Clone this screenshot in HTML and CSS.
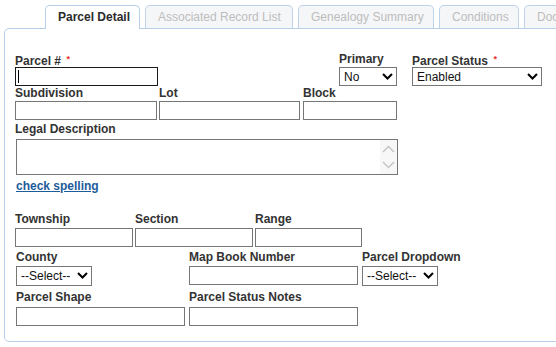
FILE: index.html
```html
<!DOCTYPE html>
<html lang="en">
<head>
    <meta charset="UTF-8">
    <meta name="viewport" content="width=device-width, initial-scale=1.0">
    <title>Parcel Detail</title>
    <link rel="stylesheet" href="styles.css">
</head>
<body>
    <div class="page">
        <div class="tabs">
            <div class="tab active tab-detail">Parcel Detail</div>
            <div class="tab tab-records">Associated Record List</div>
            <div class="tab tab-genealogy">Genealogy Summary</div>
            <div class="tab tab-conditions">Conditions</div>
            <div class="tab tab-documents">Documents</div>
        </div>

        <div class="panel">
            <div class="row row-first">
                <div class="field w-324">
                    <label>Parcel # <span class="req">*</span></label>
                    <div class="caret-wrap">
                        <input type="text" class="input focused w-143">
                    </div>
                </div>
                <div class="field w-73">
                    <label>Primary</label>
                    <div class="select-wrap w-58">
                        <select class="select"><option>No</option></select>
                        <svg class="chevron" width="11" height="7" viewBox="0 0 11 7"><polyline points="1,1 5.5,5.5 10,1" fill="none" stroke="#000" stroke-width="2"/></svg>
                    </div>
                </div>
                <div class="field w-130">
                    <label>Parcel Status <span class="req">*</span></label>
                    <div class="select-wrap w-130">
                        <select class="select"><option>Enabled</option></select>
                        <svg class="chevron" width="11" height="7" viewBox="0 0 11 7"><polyline points="1,1 5.5,5.5 10,1" fill="none" stroke="#000" stroke-width="2"/></svg>
                    </div>
                </div>
            </div>

            <div class="row">
                <div class="field w-144">
                    <label>Subdivision</label>
                    <input type="text" class="input w-142">
                </div>
                <div class="field w-144">
                    <label>Lot</label>
                    <input type="text" class="input w-141">
                </div>
                <div class="field w-94">
                    <label>Block</label>
                    <input type="text" class="input w-94">
                </div>
            </div>

            <div class="row row-legal">
                <div class="field">
                    <label>Legal Description</label>
                    <div class="textarea-wrap">
                        <textarea class="textarea"></textarea>
                        <div class="fake-scroll">
                            <svg width="13" height="8" viewBox="0 0 13 8"><polyline points="1,7 6.5,1.5 12,7" fill="none" stroke="#c6c6c6" stroke-width="1.5"/></svg>
                            <svg width="13" height="8" viewBox="0 0 13 8"><polyline points="1,1 6.5,6.5 12,1" fill="none" stroke="#c6c6c6" stroke-width="1.5"/></svg>
                        </div>
                    </div>
                </div>
            </div>
            <a href="#" class="spell-link">check spelling</a>

            <div class="row row-township">
                <div class="field w-120">
                    <label>Township</label>
                    <input type="text" class="input w-118">
                </div>
                <div class="field w-120">
                    <label>Section</label>
                    <input type="text" class="input w-118">
                </div>
                <div class="field w-107">
                    <label>Range</label>
                    <input type="text" class="input w-107">
                </div>
            </div>

            <div class="row row-county">
                <div class="field w-173">
                    <label>County</label>
                    <div class="select-wrap w-76 tall">
                        <select class="select"><option>--Select--</option></select>
                        <svg class="chevron" width="11" height="7" viewBox="0 0 11 7"><polyline points="1,1 5.5,5.5 10,1" fill="none" stroke="#000" stroke-width="2"/></svg>
                    </div>
                </div>
                <div class="field w-173">
                    <label>Map Book Number</label>
                    <input type="text" class="input w-169 push">
                </div>
                <div class="field w-76">
                    <label>Parcel Dropdown</label>
                    <div class="select-wrap w-76 tall">
                        <select class="select"><option>--Select--</option></select>
                        <svg class="chevron" width="11" height="7" viewBox="0 0 11 7"><polyline points="1,1 5.5,5.5 10,1" fill="none" stroke="#000" stroke-width="2"/></svg>
                    </div>
                </div>
            </div>

            <div class="row row-shape">
                <div class="field w-173">
                    <label>Parcel Shape</label>
                    <input type="text" class="input w-169">
                </div>
                <div class="field w-173">
                    <label>Parcel Status Notes</label>
                    <input type="text" class="input w-169">
                </div>
            </div>
        </div>
    </div>
</body>
</html>
```

FILE: styles.css
```css
body {
    margin: 0;
    font-family: 'Liberation Sans', Arial, sans-serif;
    font-size: 12px;
    color: #333;
    background: #fff;
    overflow: hidden;
}
.page {
    padding: 5px 0 0 4px;
    width: 600px;
}
.tabs {
    display: flex;
    gap: 5px;
    margin-left: 41px;
    height: 23px;
    position: relative;
    z-index: 2;
}
.tab {
    box-sizing: border-box;
    height: 23px;
    padding: 0 12px;
    border: 1px solid #bed3ea;
    border-bottom: none;
    border-radius: 5px 5px 0 0;
    background: #f5f6f8;
    color: #bdbdbd;
    line-height: 22px;
    white-space: nowrap;
    overflow: hidden;
}
.tab.active {
    height: 24px;
    background: #fff;
    color: #2b2b2b;
    font-weight: bold;
    border-color: #b7cfe9;
}
.tab-detail { width: 95px; }
.tab-records { width: 148px; }
.tab-genealogy { width: 136px; }
.tab-conditions { width: 80px; }
.tab-documents { width: 60px; }
.panel {
    box-sizing: border-box;
    width: 590px;
    height: 314px;
    border: 1px solid #b7cfe9;
    border-radius: 5px;
    padding: 23px 0 0 10px;
}
.row {
    display: flex;
    align-items: flex-start;
}
.field {
    display: flex;
    flex-direction: column;
}
label {
    display: block;
    font-weight: bold;
    line-height: 15px;
    height: 15px;
    white-space: nowrap;
    color: #333;
}
.req {
    color: #e8302a;
    font-size: 9px;
    vertical-align: 3px;
    margin-left: 2px;
}
.input {
    box-sizing: border-box;
    height: 19px;
    margin: 0;
    border: 1px solid #767676;
    background: #fff;
    font: 12px 'Liberation Sans', Arial, sans-serif;
    padding: 0 3px;
    outline: none;
}
.input.focused {
    border-color: #1a1a1a;
}
.input.push {
    margin-top: 1px;
}
.caret-wrap {
    position: relative;
}
.caret-wrap::after {
    content: '';
    position: absolute;
    left: 3px;
    top: 3px;
    width: 1px;
    height: 13px;
    background: #000;
}
.select-wrap {
    position: relative;
    height: 19px;
}
.select-wrap.tall {
    height: 20px;
}
.select {
    appearance: none;
    -webkit-appearance: none;
    box-sizing: border-box;
    width: 100%;
    height: 100%;
    margin: 0;
    border: 1px solid #767676;
    border-radius: 0;
    background: #fff;
    color: #111;
    font: 12px 'Liberation Sans', Arial, sans-serif;
    padding: 0 0 0 4px;
    outline: none;
}
.chevron {
    position: absolute;
    right: 4px;
    top: 6px;
    pointer-events: none;
}
.textarea-wrap {
    position: relative;
    width: 382px;
    height: 36px;
    margin: 2px 0 0 1px;
}
.textarea {
    box-sizing: border-box;
    width: 100%;
    height: 100%;
    margin: 0;
    border: 1px solid #767676;
    resize: none;
    overflow: hidden;
    outline: none;
    display: block;
}
.fake-scroll {
    position: absolute;
    top: 1px;
    right: 1px;
    bottom: 1px;
    width: 17px;
    background: #f7f7f7;
    display: flex;
    flex-direction: column;
    align-items: center;
    justify-content: space-between;
    padding: 5px 0 5px;
    box-sizing: border-box;
}
.spell-link {
    display: inline-block;
    margin: 4px 0 0 1px;
    line-height: 15px;
    font-weight: bold;
    color: #1d5c9a;
    text-decoration: underline;
}
.row-legal { margin-top: 2px; }
.row-township { margin-top: 18px; }
.row-township .input { margin-top: 1px; }
.row-county { margin-top: 3px; margin-left: 1px; }
.row-county .select-wrap { margin-top: 1px; }
.row-shape { margin-top: 4px; margin-left: 1px; }
.row-shape .input { margin-top: 2px; }

.w-58 { width: 58px; }
.w-73 { width: 73px; }
.w-76 { width: 76px; }
.w-94 { width: 94px; }
.w-107 { width: 107px; }
.w-118 { width: 118px; }
.w-120 { width: 120px; }
.w-130 { width: 130px; }
.w-141 { width: 141px; }
.w-142 { width: 142px; }
.w-143 { width: 143px; }
.w-144 { width: 144px; }
.w-169 { width: 169px; }
.w-173 { width: 173px; }
.w-324 { width: 324px; }
```
